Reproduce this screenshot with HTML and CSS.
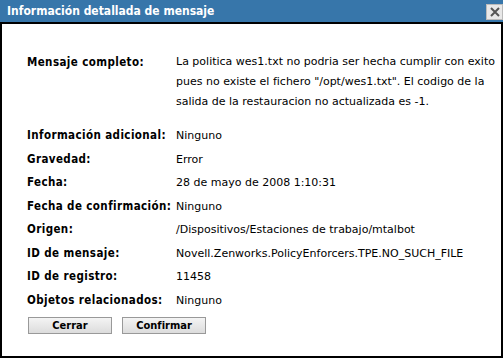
FILE: index.html
```html
<!DOCTYPE html>
<html lang="es">
<head>
  <meta charset="UTF-8">
  <title>Información detallada de mensaje</title>
  <link rel="stylesheet" href="styles.css">
</head>
<body>
  <div class="dialog">
    <div class="title-bar">
      <span class="title">Información detallada de mensaje</span>
      <button class="close" title="Cerrar">
        <svg width="12" height="12" viewBox="0 0 12 12">
          <path d="M2 2 L10 10 M10 2 L2 10" stroke="#555" stroke-width="2"/>
        </svg>
      </button>
    </div>

    <div class="content">
      <div class="row message">
        <div class="label">Mensaje completo:</div>
        <div class="value">La politica wes1.txt no podria ser hecha cumplir con exito pues no existe el fichero "/opt/wes1.txt". El codigo de la salida de la restauracion no actualizada es -1.</div>
      </div>
      <div class="row">
        <div class="label">Información adicional:</div>
        <div class="value">Ninguno</div>
      </div>
      <div class="row">
        <div class="label">Gravedad:</div>
        <div class="value">Error</div>
      </div>
      <div class="row">
        <div class="label">Fecha:</div>
        <div class="value">28 de mayo de 2008 1:10:31</div>
      </div>
      <div class="row">
        <div class="label">Fecha de confirmación:</div>
        <div class="value">Ninguno</div>
      </div>
      <div class="row">
        <div class="label">Origen:</div>
        <div class="value">/Dispositivos/Estaciones de trabajo/mtalbot</div>
      </div>
      <div class="row">
        <div class="label">ID de mensaje:</div>
        <div class="value">Novell.Zenworks.PolicyEnforcers.TPE.NO_SUCH_FILE</div>
      </div>
      <div class="row">
        <div class="label">ID de registro:</div>
        <div class="value">11458</div>
      </div>
      <div class="row">
        <div class="label">Objetos relacionados:</div>
        <div class="value">Ninguno</div>
      </div>

      <div class="buttons">
        <button class="btn">Cerrar</button>
        <button class="btn">Confirmar</button>
      </div>
    </div>
  </div>
</body>
</html>
```

FILE: styles.css
```css
:root {
  --title-bg: #3776aa;
  --border: #000;
  --text: #000;
}

body {
  margin: 0;
  padding: 0;
  background: #fff;
  font-family: 'DejaVu Sans', sans-serif;
  font-size: 11px;
  color: var(--text);
}

.dialog {
  width: 503px;
  height: 358px;
  display: flex;
  flex-direction: column;
}

.title-bar {
  height: 22px;
  background: var(--title-bg);
  border-bottom: 2px solid var(--border);
  display: flex;
  align-items: center;
  justify-content: space-between;
  padding-left: 7px;
}

.title {
  color: #fff;
  font-family: 'DejaVu Sans Condensed', 'DejaVu Sans', sans-serif;
  font-weight: bold;
  font-size: 12px;
}

.close {
  width: 17px;
  height: 16px;
  margin-top: 2px;
  padding: 0;
  border: 1px solid #bbb;
  background: #e8e8e8;
  display: flex;
  align-items: center;
  justify-content: center;
}

.content {
  flex: 1;
  border-left: 2px solid var(--border);
  border-right: 2px solid var(--border);
  border-bottom: 2px solid var(--border);
  padding: 28px 0 0 25px;
}

.row {
  display: grid;
  grid-template-columns: 149px 1fr;
  line-height: 23.5px;
}

.label {
  font-weight: bold;
  font-size: 11.5px;
  font-family: 'DejaVu Sans Condensed', 'DejaVu Sans', sans-serif;
  letter-spacing: 0.4px;
}

.row.message {
  line-height: 20px;
  padding-bottom: 12px;
}

.row.message .value {
  width: 326px;
}

.buttons {
  display: flex;
  gap: 10px;
  margin-top: 5px;
  padding-left: 1px;
}

.btn {
  width: 84px;
  height: 17px;
  padding: 0;
  font-family: 'DejaVu Sans Condensed', 'DejaVu Sans', sans-serif;
  font-size: 11px;
  font-weight: bold;
  color: #000;
  border: 1px solid #999;
  background: linear-gradient(#f4f4f4, #dcdcdc);
}
```
